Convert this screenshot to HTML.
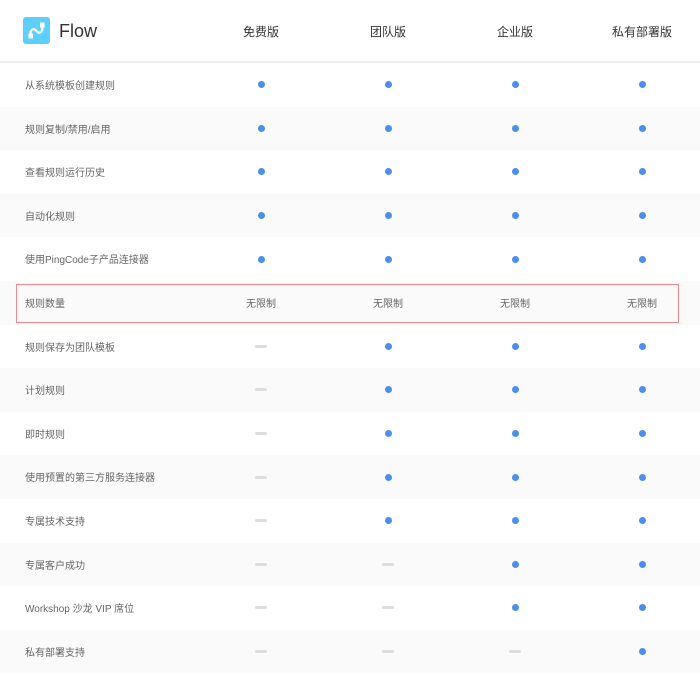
<!DOCTYPE html>
<html><head><meta charset="utf-8"><style>
*{margin:0;padding:0;box-sizing:border-box}
body{width:700px;height:673px;background:#fff;font-family:"Liberation Sans","Noto Sans CJK SC",sans-serif;position:relative;overflow:hidden}
.hdr{position:absolute;left:0;top:0;width:700px;height:63px;border-bottom:2px solid #eee}
.logo{position:absolute;left:23px;top:17px;width:27px;height:27px;background:#5ccffa;border-radius:3px}
.flow{position:absolute;left:59px;top:21px;font-size:18px;color:#333}
.col{position:absolute;width:120px;text-align:center;font-size:12px;color:#333}
.row{position:absolute;left:0;width:700px;height:43.6px}
.row.g{background:#fafafa}
.lab{position:absolute;left:25px;top:2px;line-height:43.6px;font-size:10px;color:#666}
.c{position:absolute;top:0;width:120px;height:43.6px;display:flex;align-items:center;justify-content:center;font-size:10px;color:#666}
.d{width:7px;height:7px;border-radius:50%;background:#4a8fe8}
.m{width:12px;height:3px;border-radius:2px;background:#ddd}
.box{position:absolute;left:16px;top:284px;width:663px;height:39px;border:1px solid #f08a8a}
</style></head><body>
<div class="hdr">
<div class="logo"><svg width="27" height="27" viewBox="0 0 27 27"><rect x="5.5" y="16.5" width="4.5" height="5" fill="#fff"/><rect x="17" y="5.5" width="4.5" height="5" fill="#fff"/><path d="M7.5 17 C7.5 12 11 11 13.5 14 C16 17 19.5 16 19.5 10" stroke="#fff" stroke-width="2.2" fill="none"/></svg></div>
<div class="flow">Flow</div>
<div class="col" style="left:201px;top:23px">免费版</div>
<div class="col" style="left:328px;top:23px">团队版</div>
<div class="col" style="left:455px;top:23px">企业版</div>
<div class="col" style="left:582px;top:23px">私有部署版</div>
</div>
<div id="rows"></div>
<div class="box"></div>
<script>
var R=[["从系统模板创建规则","dddd"],["规则复制/禁用/启用","dddd"],["查看规则运行历史","dddd"],["自动化规则","dddd"],["使用PingCode子产品连接器","dddd"],["规则数量","uuuu"],["规则保存为团队模板","mddd"],["计划规则","mddd"],["即时规则","mddd"],["使用预置的第三方服务连接器","mddd"],["专属技术支持","mddd"],["专属客户成功","mmdd"],["Workshop 沙龙 VIP 席位","mmdd"],["私有部署支持","mmmd"]];
var h="",L=[201,328,455,582];
R.forEach(function(r,i){h+='<div class="row'+(i%2?' g':'')+'" style="top:'+(63+i*43.6)+'px"><div class="lab">'+r[0]+'</div>';
for(var j=0;j<4;j++){var t=r[1][j];h+='<div class="c" style="left:'+L[j]+'px">'+(t=="d"?'<div class="d"></div>':t=="m"?'<div class="m"></div>':'无限制')+'</div>';}
h+='</div>';});
document.getElementById("rows").innerHTML=h;
</script>
</body></html>
